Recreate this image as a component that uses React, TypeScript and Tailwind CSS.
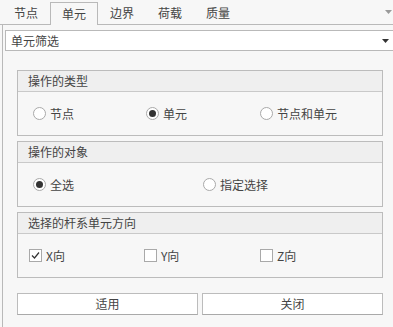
import React from 'react'

const FONT = { fontFamily: '"Noto Sans CJK SC", "Microsoft YaHei", sans-serif' }

const tabs = ['节点', '单元', '边界', '荷载', '质量']

function Radio({ checked, label }: { checked?: boolean; label: string }) {
  return (
    <div className="flex items-center gap-[4px]">
      <div className="w-[13px] h-[13px] rounded-full border border-[#a9a9a9] bg-white flex items-center justify-center shrink-0">
        {checked && <div className="w-[7px] h-[7px] rounded-full bg-[#333]" />}
      </div>
      <span>{label}</span>
    </div>
  )
}

function CheckBox({ checked, label }: { checked?: boolean; label: string }) {
  return (
    <div className="flex items-center gap-[4px]">
      <div className="w-[13px] h-[13px] border border-[#a9a9a9] bg-white flex items-center justify-center shrink-0">
        {checked && (
          <svg width="9" height="9" viewBox="0 0 9 9">
            <path d="M1 4.5 L3.5 7 L8 1.5" fill="none" stroke="#333" strokeWidth="1.2" />
          </svg>
        )}
      </div>
      <span>{label}</span>
    </div>
  )
}

function Group({ title, children }: { title: string; children: React.ReactNode }) {
  return (
    <div className="w-[366px] h-[66px] border border-[#bcbcbc] flex flex-col">
      <div className="h-[21px] shrink-0 bg-[#efefef] border-b border-[#c9c9c9] flex items-center pl-[10px]">
        {title}
      </div>
      <div className="flex-1 flex items-center bg-[#f7f7f7]">{children}</div>
    </div>
  )
}

export default function App() {
  return (
    <div className="w-[393px] h-[327px] bg-[#f7f7f7] text-[12px] text-[#444] overflow-hidden flex flex-col" style={FONT}>
      {/* Tab bar */}
      <div className="h-[25px] shrink-0 flex items-end pl-[2px] border-b border-[#b9b9b9] relative">
        {tabs.map(t => (
          <div
            key={t}
            className={`w-[48px] flex items-center justify-center ${
              t === '单元'
                ? 'h-[23px] -mb-px border border-b-0 border-[#b9b9b9] bg-[#f7f7f7]'
                : 'h-[22px]'
            }`}
          >
            {t}
          </div>
        ))}
        <div className="ml-auto mr-[1px] self-center">
          <svg width="7" height="4" viewBox="0 0 7 4">
            <path d="M0 0 H7 L3.5 4 Z" fill="#9a9a9a" />
          </svg>
        </div>
      </div>

      {/* Panel */}
      <div className="flex-1 ml-[2px] border-l border-[#b9b9b9] flex flex-col">
        <div className="mt-[5px] ml-[2px] h-[21px] bg-white border-y border-l border-[#b9b9b9] flex items-center pl-[5px] pr-[4px]">
          <span className="flex-1">单元筛选</span>
          <svg width="7" height="4" viewBox="0 0 7 4">
            <path d="M0 0 H7 L3.5 4 Z" fill="#333" />
          </svg>
        </div>

        <div className="ml-[14px] mt-[19px] flex flex-col gap-[5px]">
          <Group title="操作的类型">
            <div className="flex pl-[15px]">
              <div className="w-[113px]"><Radio label="节点" /></div>
              <div className="w-[114px]"><Radio checked label="单元" /></div>
              <div><Radio label="节点和单元" /></div>
            </div>
          </Group>
          <Group title="操作的对象">
            <div className="flex pl-[15px]">
              <div className="w-[170px]"><Radio checked label="全选" /></div>
              <div><Radio label="指定选择" /></div>
            </div>
          </Group>
          <Group title="选择的杆系单元方向">
            <div className="flex pl-[11px]">
              <div className="w-[115px]"><CheckBox checked label="X向" /></div>
              <div className="w-[116px]"><CheckBox label="Y向" /></div>
              <div><CheckBox label="Z向" /></div>
            </div>
          </Group>

          <div className="mt-[10px] flex gap-[4px] w-[366px]">
            <button className="w-[181px] h-[22px] bg-white border border-[#bcbcbc] border-b-[#a9a9a9]">适用</button>
            <button className="w-[181px] h-[22px] bg-white border border-[#bcbcbc] border-b-[#a9a9a9]">关闭</button>
          </div>
        </div>
      </div>
    </div>
  )
}
